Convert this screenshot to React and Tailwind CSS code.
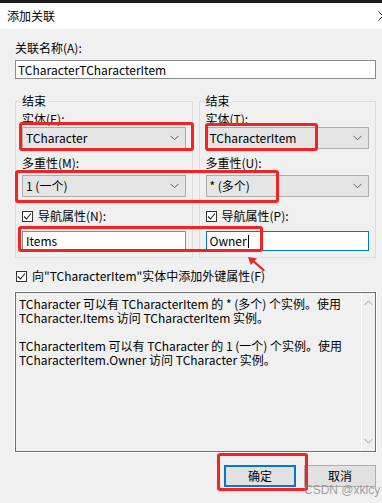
import React from "react";

const font = "font-['Noto_Sans_CJK_SC','Noto_Sans',sans-serif]";

function Chevron() {
  return (
    <svg width="9" height="6" viewBox="0 0 9 6" className="shrink-0">
      <path d="M0.5 0.8 L4.5 4.8 L8.5 0.8" fill="none" stroke="#606060" strokeWidth="1" />
    </svg>
  );
}

function Combo({ value }) {
  return (
    <div className="flex h-[22px] items-center justify-between border border-[#adadad] bg-[#e5e5e5] pl-[3px] pr-[6px]">
      <span>{value}</span>
      <Chevron />
    </div>
  );
}

function CheckBox() {
  return (
    <span className="grid h-[11px] w-[11px] place-items-center border border-[#333] bg-white">
      <svg width="9" height="9" viewBox="0 0 9 9">
        <path d="M1 4.5 L3.5 7 L8 1.5" fill="none" stroke="#222" strokeWidth="1.1" />
      </svg>
    </span>
  );
}

function TextBox({ value, focused, caret }) {
  return (
    <div
      className={`flex h-[20px] items-center bg-white px-[3px] border ${
        focused ? "border-[#0078d7]" : "border-[#8c8c8c]"
      }`}
    >
      <span>{value}</span>
      {caret && <span className="ml-[1px] h-[13px] w-[1px] bg-black" />}
    </div>
  );
}

function End({ entityLabel, entity, multLabel, mult, navLabel, nav, focused }) {
  return (
    <fieldset className="flex-1 border border-[#dcdcdc] px-[6px] pb-[6px]">
      <legend className="ml-[-1px] px-[1px] leading-[14px]">结束</legend>
      <div className="mt-[4px]">{entityLabel}</div>
      <div className="mt-[1px]">
        <Combo value={entity} />
      </div>
      <div className="mt-[7px]">{multLabel}</div>
      <div className="mt-[5px]">
        <Combo value={mult} />
      </div>
      <div className="mt-[12px] flex items-center gap-[5px]">
        <CheckBox />
        <span>{navLabel}</span>
      </div>
      <div className="mt-[8px]">
        <TextBox value={nav} focused={focused} caret={focused} />
      </div>
    </fieldset>
  );
}

const redBoxes = [
  "left-[19px] top-[122px] w-[175px] h-[29px]",
  "left-[205px] top-[123px] w-[113px] h-[28px]",
  "left-[15px] top-[170px] w-[264px] h-[33px]",
  "left-[18px] top-[226px] w-[245px] h-[26px]",
  "left-[217px] top-[453px] w-[91px] h-[38px]",
];

export default function App() {
  return (
    <div className={`relative h-[503px] w-[382px] overflow-hidden bg-[#f0f0f0] text-[12px] leading-[14px] text-black ${font}`}>
      <div className="h-[3px] bg-[#1c1c1c]" />
      <div className="flex h-[26px] items-center justify-between bg-white pl-[7px]">
        <span>添加关联</span>
        <svg width="10" height="10" viewBox="0 0 10 10" className="mr-[-6px]">
          <path d="M0.5 0.5 L9.5 9.5 M9.5 0.5 L0.5 9.5" stroke="#222" strokeWidth="1" />
        </svg>
      </div>

      <div className="pl-[15px] pr-[6px] pt-[12px]">
        <div>关联名称(A):</div>
        <div className="mt-[5px] flex h-[19px] items-center border border-[#8c8c8c] bg-white px-[2px]">
          TCharacterTCharacterItem
        </div>

        <div className="mt-[15px] flex gap-[6px]">
          <End entityLabel="实体(E):" entity="TCharacter" multLabel="多重性(M):" mult="1 (一个)" navLabel="导航属性(N):" nav="Items" />
          <End entityLabel="实体(T):" entity="TCharacterItem" multLabel="多重性(U):" mult="* (多个)" navLabel="导航属性(P):" nav="Owner" focused />
        </div>

        <div className="mt-[11px] flex items-center gap-[5px] pl-[1px]">
          <CheckBox />
          <span>向"TCharacterItem"实体中添加外键属性(F)</span>
        </div>

        <div className="mt-[9px] flex h-[160px] border border-[#6e6e6e] shadow-[0_0_0_1px_#ffffff]">
          <div className="flex-1 whitespace-pre-line pl-[3px] pt-[4px] leading-[14px]">
            {"TCharacter 可以有 TCharacterItem 的 * (多个) 个实例。使用\nTCharacter.Items 访问 TCharacterItem 实例。\n\nTCharacterItem 可以有 TCharacter 的 1 (一个) 个实例。使用\nTCharacterItem.Owner 访问 TCharacter 实例。"}
          </div>
          <div className="flex w-[14px] flex-col items-center justify-between border-l border-white py-[7px]">
            <svg width="9" height="6" viewBox="0 0 9 6">
              <path d="M0.5 5 L4.5 1 L8.5 5" fill="none" stroke="#c0c0c0" strokeWidth="1.2" />
            </svg>
            <svg width="9" height="6" viewBox="0 0 9 6">
              <path d="M0.5 1 L4.5 5 L8.5 1" fill="none" stroke="#c0c0c0" strokeWidth="1.2" />
            </svg>
          </div>
        </div>

        <div className="mt-[13px] flex justify-end gap-[8px]">
          <button type="button" className="h-[22px] w-[72px] border border-[#0078d7] bg-[#e1e1e1] shadow-[inset_0_0_0_1px_#0078d7]">
            确定
          </button>
          <button type="button" className="h-[22px] w-[72px] border border-[#adadad] bg-[#e1e1e1]">
            取消
          </button>
        </div>
      </div>

      {redBoxes.map((c) => (
        <div key={c} className={`pointer-events-none absolute rounded-[3px] border-[3px] border-[#f52222] ${c}`} />
      ))}

      <svg className="pointer-events-none absolute left-[244px] top-[253px]" width="26" height="22" viewBox="0 0 26 22">
        <path d="M4 4 L13 5.5 L10.5 7.8 L21 17 L19.5 18.5 L9 9.3 L6.8 12 Z" fill="#ee2222" />
      </svg>

      <div className="pointer-events-none absolute left-[304px] top-[483px] text-[12px] text-[#8a8a8a]/80 font-['Liberation_Sans',sans-serif]">
        CSDN @xklcy
      </div>
    </div>
  );
}
